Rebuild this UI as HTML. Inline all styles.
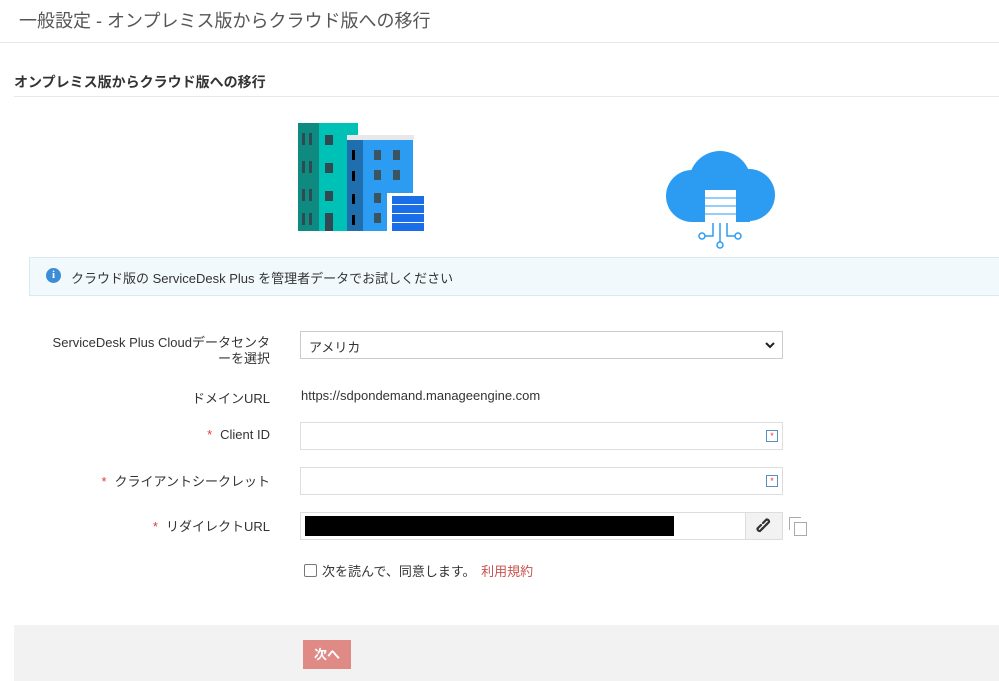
<!DOCTYPE html>
<html><head><meta charset="utf-8"><style>
*{box-sizing:border-box;margin:0;padding:0}
body{width:999px;height:681px;overflow:hidden;background:#fff;font-family:"Liberation Sans","Noto Sans CJK JP",sans-serif;color:#333;position:relative}
.a{position:absolute}
.lbl{position:absolute;right:729px;font-size:13px;color:#333;text-align:right}
.req{color:#e03c3c;margin-right:8px}
.inp{position:absolute;left:300px;width:483px;height:28px;border:1px solid #ddd;background:#fff}
</style></head><body>
<div class="a" style="left:19px;top:7px;font-size:18px;color:#555">一般設定 - オンプレミス版からクラウド版への移行</div>
<div class="a" style="left:0;top:42px;width:999px;height:1px;background:#e8e8e8"></div>
<div class="a" style="left:14px;top:72px;font-size:14px;font-weight:bold;color:#333">オンプレミス版からクラウド版への移行</div>
<div class="a" style="left:14px;top:96px;width:985px;height:1px;background:#e8e8e8"></div>

<svg class="a" style="left:290px;top:115px" width="500" height="140">
<rect x="8" y="8" width="21" height="108" fill="#0e8a80"/>
<rect x="29" y="8" width="39" height="108" fill="#00c1b5"/>
<g fill="#2f4a52"><rect x="12" y="18" width="3" height="12"/><rect x="19" y="18" width="3" height="12"/><rect x="12" y="46" width="3" height="12"/><rect x="19" y="46" width="3" height="12"/><rect x="12" y="74" width="3" height="12"/><rect x="19" y="74" width="3" height="12"/><rect x="12" y="98" width="3" height="12"/><rect x="19" y="98" width="3" height="12"/>
<rect x="35" y="20" width="8" height="10"/><rect x="35" y="48" width="8" height="10"/><rect x="35" y="76" width="8" height="10"/><rect x="35" y="98" width="8" height="18"/></g>
<rect x="57" y="20" width="67" height="5" fill="#e8e8e8"/>
<rect x="57" y="25" width="16" height="91" fill="#1f6fae"/>
<rect x="73" y="25" width="50" height="91" fill="#2b9cf2"/>
<g fill="#3a5560"><rect x="84" y="35" width="7" height="10"/><rect x="103" y="35" width="7" height="10"/><rect x="84" y="55" width="7" height="10"/><rect x="103" y="55" width="7" height="10"/><rect x="84" y="78" width="7" height="10"/><rect x="84" y="98" width="7" height="10"/></g>
<g fill="#000"><rect x="62" y="35" width="3" height="10"/><rect x="62" y="56" width="3" height="10"/><rect x="62" y="79" width="3" height="10"/><rect x="62" y="100" width="3" height="10"/></g>
<rect x="97" y="78" width="37" height="38" fill="#fff"/>
<g fill="#1a6ee8"><rect x="102" y="81" width="32" height="8"/><rect x="102" y="90" width="32" height="8"/><rect x="102" y="99" width="32" height="8"/><rect x="102" y="108" width="32" height="8"/></g>
<g fill="#2b9cf2"><circle cx="402" cy="81" r="26"/><circle cx="430" cy="67" r="31"/><circle cx="459" cy="80" r="26"/><rect x="402" y="70" width="58" height="37"/></g>
<rect x="415" y="75" width="31" height="32" fill="#fff"/>
<g stroke="#2b9cf2" stroke-width="1"><line x1="415" y1="83" x2="446" y2="83"/><line x1="415" y1="91" x2="446" y2="91"/><line x1="415" y1="99" x2="446" y2="99"/></g>
<g stroke="#2b9cf2" stroke-width="1.5" fill="none"><path d="M423 108 V121 H415"/><path d="M430 108 V127"/><path d="M437 108 V121 H445"/><circle cx="412" cy="121" r="3"/><circle cx="448" cy="121" r="3"/><circle cx="430" cy="130" r="3"/></g>
</svg>

<div class="a" style="left:29px;top:257px;width:970px;height:39px;background:#f2f9fd;border:1px solid #d6eaf5;border-right:none"></div>
<div class="a" style="left:46px;top:268px;width:15px;height:15px;border-radius:50%;background:#3b8ed6;color:#fff;font-size:11px;font-weight:bold;text-align:center;line-height:15px;font-family:'Liberation Serif',serif">i</div>
<div class="a" style="left:71px;top:268px;font-size:13px;color:#333">クラウド版の ServiceDesk Plus を管理者データでお試しください</div>

<div class="lbl" style="top:335px;line-height:16px">ServiceDesk Plus Cloudデータセンタ<br>ーを選択</div>
<div class="inp" style="top:331px;padding:5px 8px;font-size:13px;border-color:#ccc">アメリカ<svg style="position:absolute;right:7px;top:10px" width="10" height="7"><path d="M1 1 L5 5 L9 1" stroke="#222" stroke-width="2" fill="none"/></svg></div>
<div class="lbl" style="top:388px">ドメインURL</div>
<div class="a" style="left:301px;top:388px;font-size:13px">https://sdpondemand.manageengine.com</div>
<div class="lbl" style="top:427px"><span class="req">*</span>Client ID</div>
<div class="inp" style="top:422px"><span style="position:absolute;right:4px;top:7px;width:12px;height:12px;border:1px solid #5a8fc6;color:#e03c3c;font-size:9px;line-height:10px;text-align:center">*</span></div>
<div class="lbl" style="top:471px"><span class="req">*</span>クライアントシークレット</div>
<div class="inp" style="top:467px"><span style="position:absolute;right:4px;top:7px;width:12px;height:12px;border:1px solid #5a8fc6;color:#e03c3c;font-size:9px;line-height:10px;text-align:center">*</span></div>
<div class="lbl" style="top:516px"><span class="req">*</span>リダイレクトURL</div>
<div class="inp" style="top:512px;width:446px"><div style="position:absolute;left:4px;top:3px;width:369px;height:20px;background:#000"></div></div>
<div class="a" style="left:745px;top:512px;width:38px;height:28px;background:#f2f2f2;border:1px solid #ddd">
<svg style="position:absolute;left:10px;top:5px" width="17" height="17"><g stroke="#333" stroke-width="2.2" fill="none" stroke-linecap="round"><path d="M7 10 L4 13 A2.2 2.2 0 0 1 1.5 10.5 L5 7"/><path d="M10 7 L13 4 A2.2 2.2 0 0 0 10.5 1.5 L7 5"/><path d="M6 11 L11 6"/></g></svg></div>
<div class="a" style="left:789px;top:517px;width:12px;height:13px;border:1px solid #aaa;border-right:none;border-bottom:none"></div>
<div class="a" style="left:794px;top:522px;width:13px;height:14px;border:1px solid #aaa"></div>

<div class="a" style="left:304px;top:564px;width:13px;height:13px;border:1px solid #777;border-radius:2px"></div>
<div class="a" style="left:322px;top:561px;font-size:13px">次を読んで、同意します。 <span style="color:#c9524f;margin-left:2px">利用規約</span></div>

<div class="a" style="left:14px;top:625px;width:985px;height:56px;background:#f2f2f2"></div>
<div class="a" style="left:303px;top:640px;width:48px;height:29px;background:#e08a86;color:#fff;font-size:13px;font-weight:bold;text-align:center;line-height:29px">次へ</div>
</body></html>
